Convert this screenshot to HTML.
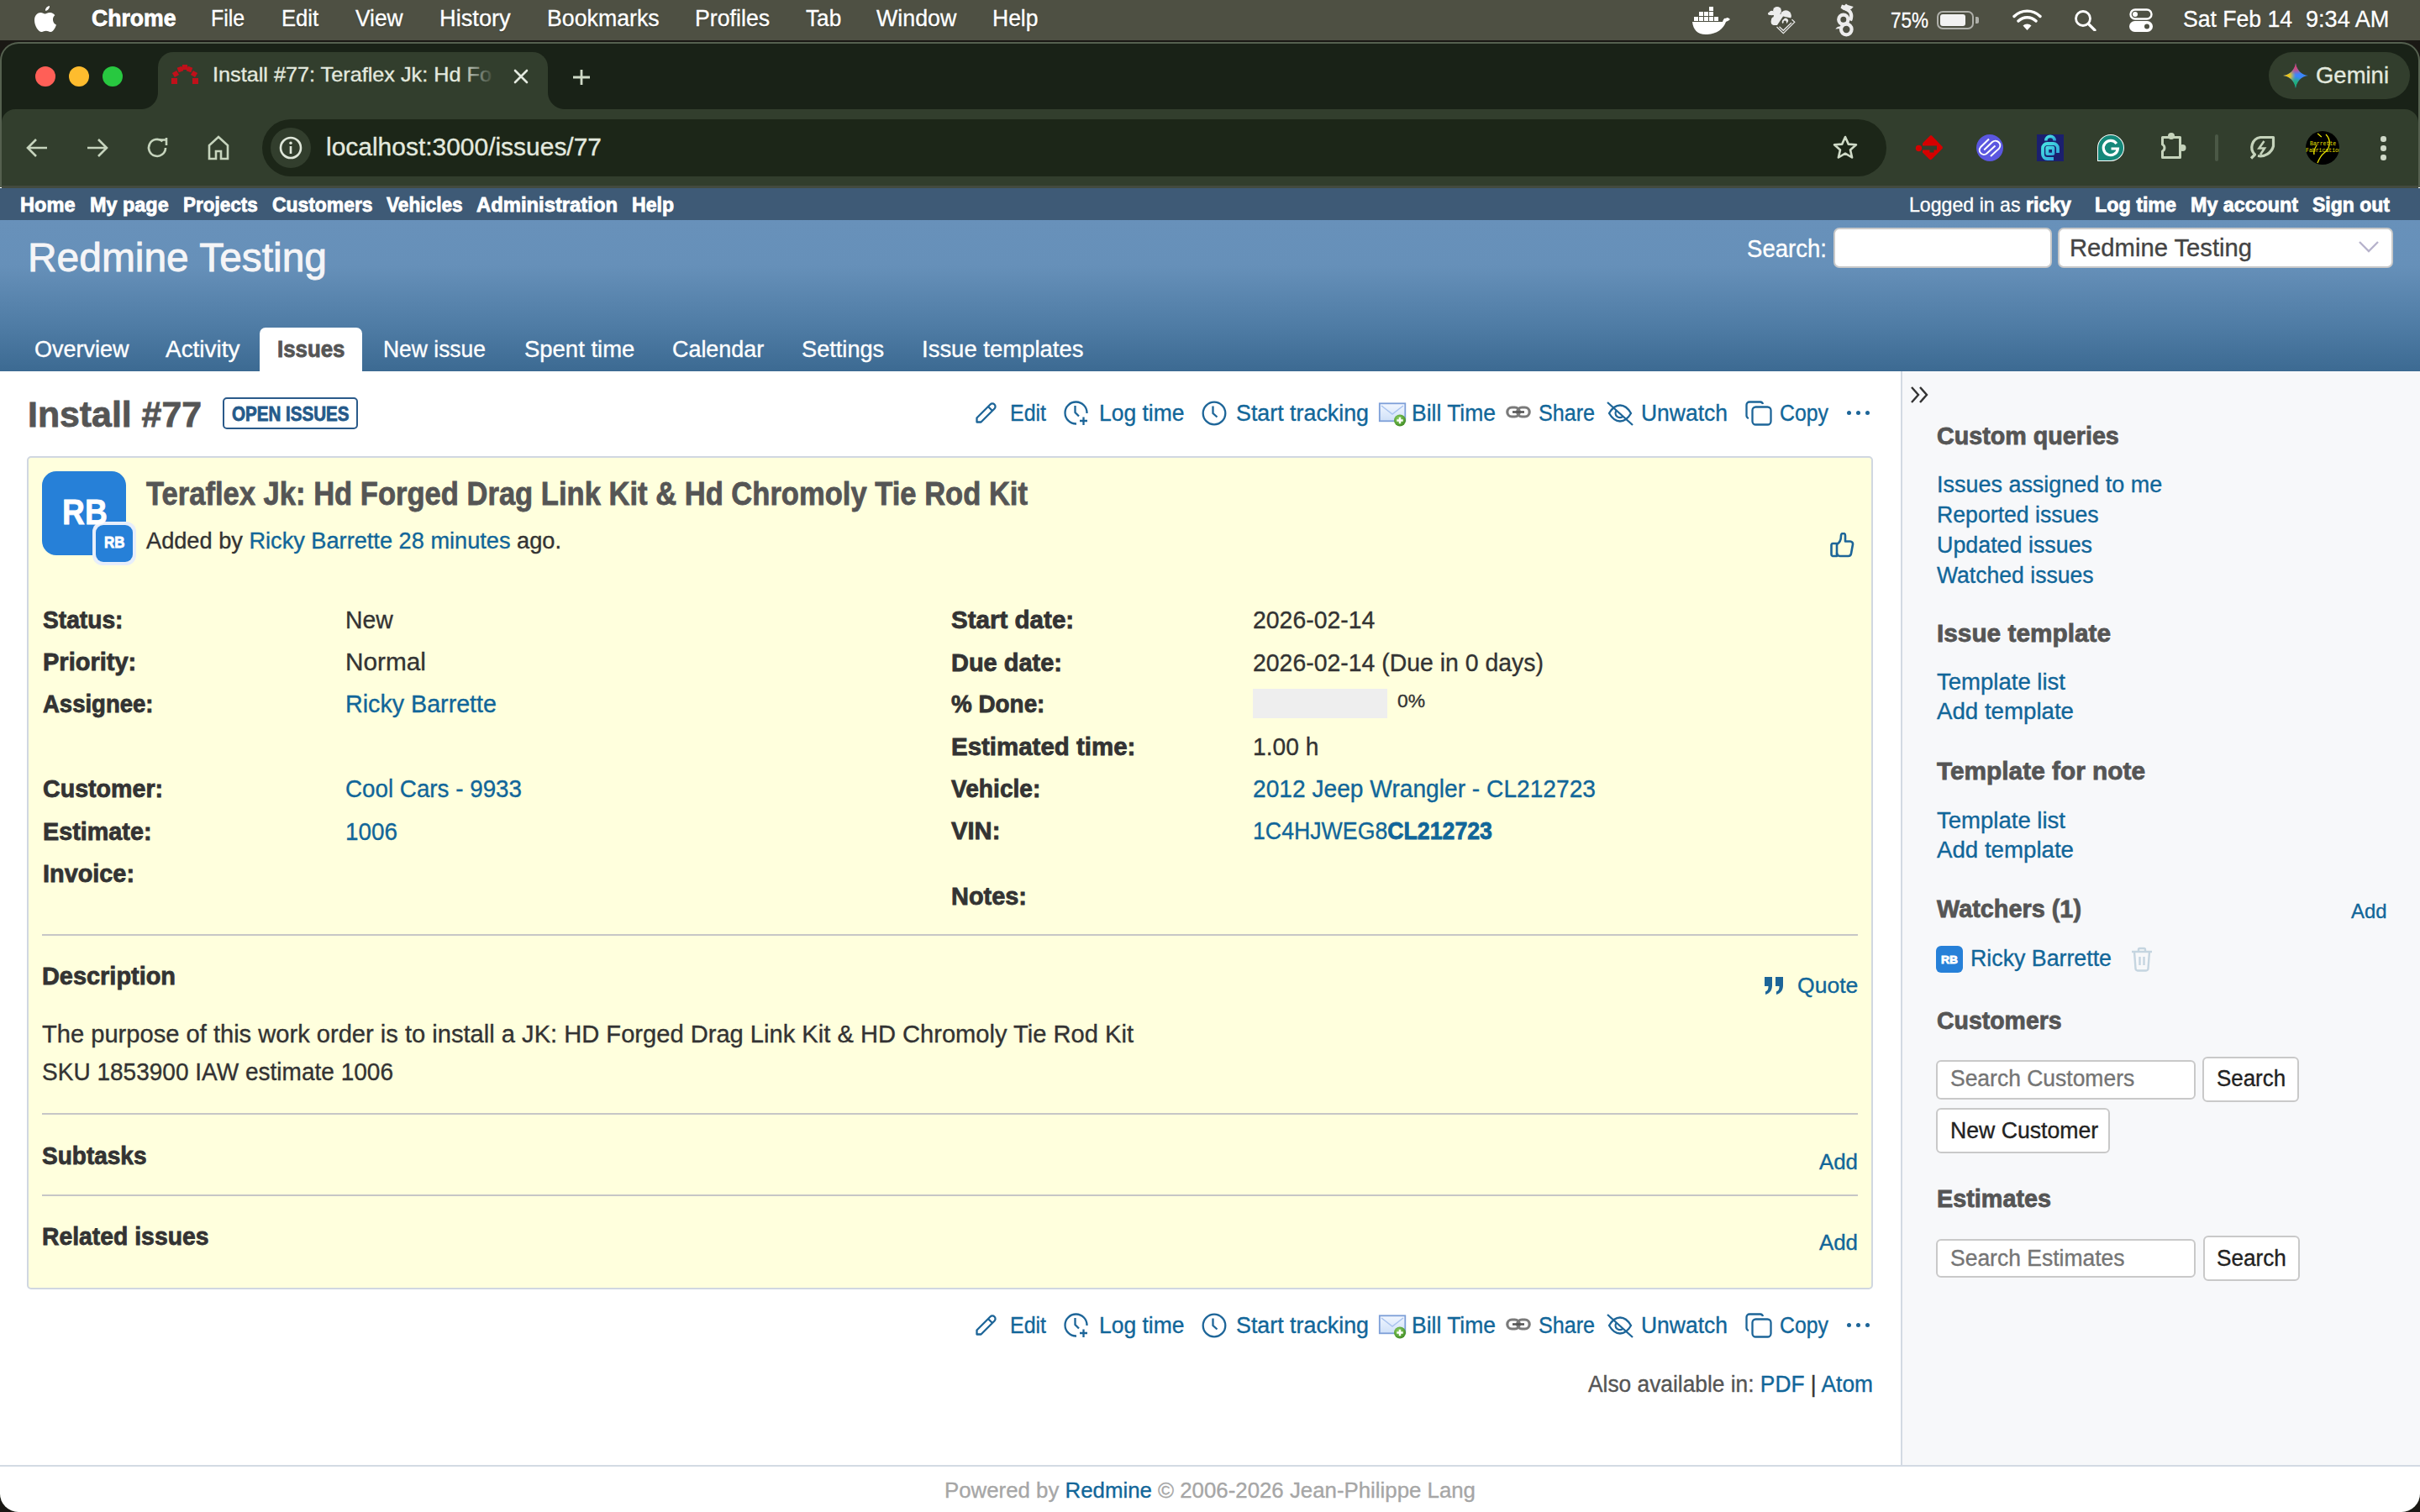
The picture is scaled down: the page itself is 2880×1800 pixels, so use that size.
<!DOCTYPE html><html><head><meta charset="utf-8"><style>html,body{margin:0;padding:0;width:2880px;height:1800px;overflow:hidden;background:#000;font-family:"Liberation Sans",sans-serif}.t{position:absolute;white-space:nowrap;line-height:1;transform-origin:0 0;-webkit-text-stroke:0.35px currentColor}.tb{-webkit-text-stroke:0.8px currentColor}b{font-weight:bold;-webkit-text-stroke:0.8px currentColor}</style></head><body>
<div style="position:absolute;left:0;top:0;width:2880px;height:48px;background:#4e5043"></div>
<div style="position:absolute;left:0;top:48px;width:2880px;height:2px;background:#15140f"></div>
<div style="position:absolute;left:0;top:48px;width:2880px;height:1752px;background:#1a1814"></div>
<div style="position:absolute;left:0;top:50px;width:2880px;height:1750px;background:#192217;border-radius:22px;overflow:hidden;box-shadow:inset 0 0 0 2px #55604f"></div>
<div style="position:absolute;left:2px;top:130px;width:2876px;height:94px;background:#323e2d;border-radius:16px 16px 0 0"></div>
<div style="position:absolute;left:188px;top:62px;width:464px;height:80px;background:#323e2d;border-radius:18px 18px 0 0"></div>
<div style="position:absolute;left:168px;top:110px;width:20px;height:20px;background:radial-gradient(circle at 0 0,#192217 19.5px,#323e2d 20.5px)"></div>
<div style="position:absolute;left:652px;top:110px;width:20px;height:20px;background:radial-gradient(circle at 100% 0,#192217 19.5px,#323e2d 20.5px)"></div>
<div style="position:absolute;left:42px;top:79px;width:24px;height:24px;border-radius:50%;background:#ff5f57"></div>
<div style="position:absolute;left:82px;top:79px;width:24px;height:24px;border-radius:50%;background:#febc2e"></div>
<div style="position:absolute;left:122px;top:79px;width:24px;height:24px;border-radius:50%;background:#28c840"></div>
<svg style="position:absolute;left:203px;top:76px" width="34" height="26" viewBox="0 0 34 26">
<g fill="#c0101a">
<rect x="1" y="17" width="7" height="7"/><rect x="26" y="17" width="7" height="7"/>
<rect x="3" y="9" width="6" height="6" transform="rotate(-30 6 12)"/><rect x="25" y="9" width="6" height="6" transform="rotate(30 28 12)"/>
<rect x="8.5" y="3.5" width="6" height="6" transform="rotate(-20 11.5 6.5)"/><rect x="19.5" y="3.5" width="6" height="6" transform="rotate(20 22.5 6.5)"/>
<rect x="14" y="1" width="6" height="6"/>
</g></svg>
<svg style="position:absolute;left:610px;top:81px" width="20" height="20" viewBox="0 0 20 20"><path d="M3 3L17 17M17 3L3 17" stroke="#e3e9df" stroke-width="2.6" stroke-linecap="round"/></svg>
<svg style="position:absolute;left:680px;top:82px" width="24" height="20" viewBox="0 0 24 20"><path d="M12 1V19M2 10H22" stroke="#cfdac7" stroke-width="2.8"/></svg>
<div style="position:absolute;left:2700px;top:62px;width:168px;height:56px;background:#323e2d;border-radius:28px"></div>
<svg style="position:absolute;left:2717px;top:75px" width="30" height="30" viewBox="0 0 30 30"><defs>
<clipPath id="gclip"><path d="M15 0C15.8 8 22 14.2 30 15C22 15.8 15.8 22 15 30C14.2 22 8 15.8 0 15C8 14.2 14.2 8 15 0Z"/></clipPath>
<radialGradient id="gy" cx="0" cy="15" r="15" gradientUnits="userSpaceOnUse"><stop offset="0" stop-color="#ffb800"/><stop offset=".55" stop-color="#ffd000" stop-opacity=".85"/><stop offset="1" stop-color="#ffd000" stop-opacity="0"/></radialGradient>
<radialGradient id="gr" cx="15" cy="0" r="14" gradientUnits="userSpaceOnUse"><stop offset="0" stop-color="#ff2d4a"/><stop offset=".6" stop-color="#f04060" stop-opacity=".7"/><stop offset="1" stop-color="#f04060" stop-opacity="0"/></radialGradient>
<radialGradient id="gn" cx="15" cy="30" r="14" gradientUnits="userSpaceOnUse"><stop offset="0" stop-color="#00c060"/><stop offset=".6" stop-color="#20b860" stop-opacity=".75"/><stop offset="1" stop-color="#20b860" stop-opacity="0"/></radialGradient>
</defs><g clip-path="url(#gclip)"><rect width="30" height="30" fill="#3b86fb"/><rect width="30" height="30" fill="url(#gy)"/><rect width="30" height="30" fill="url(#gr)"/><rect width="30" height="30" fill="url(#gn)"/></g></svg>
<div style="position:absolute;left:312px;top:142px;width:1933px;height:68px;background:#1c2618;border-radius:34px"></div>
<div style="position:absolute;left:322px;top:152px;width:48px;height:48px;background:#323e2d;border-radius:50%"></div>
<svg style="position:absolute;left:332px;top:162px" width="28" height="28" viewBox="0 0 28 28"><circle cx="14" cy="14" r="12" fill="none" stroke="#dfe7da" stroke-width="2.6"/><rect x="12.7" y="12" width="2.6" height="9" fill="#dfe7da"/><circle cx="14" cy="8.3" r="1.7" fill="#dfe7da"/></svg>
<svg style="position:absolute;left:30px;top:163px" width="28" height="26" viewBox="0 0 28 26"><path d="M26 13H4M13 3L3 13L13 23" fill="none" stroke="#c6d4bd" stroke-width="2.6"/></svg>
<svg style="position:absolute;left:102px;top:163px" width="28" height="26" viewBox="0 0 28 26"><path d="M2 13H24M15 3L25 13L15 23" fill="none" stroke="#c6d4bd" stroke-width="2.6"/></svg>
<svg style="position:absolute;left:174px;top:162px" width="28" height="28" viewBox="0 0 28 28"><path d="M23 14A10 10 0 1 1 19.5 6.3" fill="none" stroke="#c6d4bd" stroke-width="2.6"/><path d="M16 4.5H24V2.5M24 2V11" fill="none" stroke="#c6d4bd" stroke-width="2.6"/></svg>
<svg style="position:absolute;left:246px;top:161px" width="28" height="30" viewBox="0 0 28 30"><path d="M3 28V12L14 2L25 12V28H17V19H11V28Z" fill="none" stroke="#c6d4bd" stroke-width="2.6" stroke-linejoin="miter"/></svg>
<svg style="position:absolute;left:2180px;top:160px" width="32" height="32" viewBox="0 0 32 32"><path d="M16 3L19.8 11.6L29 12.3L22 18.4L24.1 27.5L16 22.7L7.9 27.5L10 18.4L3 12.3L12.2 11.6Z" fill="none" stroke="#cfdac7" stroke-width="2.6" stroke-linejoin="round"/></svg>
<svg style="position:absolute;left:2278px;top:159px" width="36" height="34" viewBox="2278 159 36 34"><path d="M2297 161.5Q2298 160.5 2299 161.5L2311.5 174.5Q2312.5 176 2311.5 177L2299 189.5Q2297.5 191 2296 189.5L2288 181.5V170.5Z" fill="#d50000"/><path d="M2287 173.5H2305V178.5H2301.5V181.5H2296.5V178.5H2287Z" fill="#323e2d"/><circle cx="2283.5" cy="176.5" r="3.7" fill="#d50000"/></svg>
<svg style="position:absolute;left:2348px;top:156px" width="40" height="40" viewBox="0 0 40 40"><circle cx="20" cy="20" r="16" fill="#5b57e0"/><path d="M19 9.5L9 19.3A5.25 5.25 0 0 0 16.4 26.7L26.5 17.5M13.2 22.5L23 13A5.6 5.6 0 0 1 30.9 20.9L21 30" fill="none" stroke="#fff" stroke-width="2"/></svg>
<svg style="position:absolute;left:2420px;top:156px" width="40" height="40" viewBox="0 0 40 40"><defs><linearGradient id="lg" x1="0" y1="0" x2="1" y2="1"><stop offset="0" stop-color="#48e4e2"/><stop offset="1" stop-color="#2ea2da"/></linearGradient></defs><rect x="4" y="4" width="32" height="32" fill="#1b1f6e"/><path d="M14.8 11.5A5.2 5.2 0 0 1 25.2 11.5" fill="none" stroke="url(#lg)" stroke-width="3.7"/><path d="M24 33H16.5A5.5 5.5 0 0 1 11 27.5V20.5A5.5 5.5 0 0 1 16.5 15H23.5A5.5 5.5 0 0 1 29 20.5V26" fill="none" stroke="url(#lg)" stroke-width="3.8"/><rect x="14.3" y="17.7" width="11" height="11.4" rx="2.5" fill="url(#lg)"/><rect x="18.3" y="22" width="3.7" height="3.7" fill="#1b1f6e"/></svg>
<svg style="position:absolute;left:2495px;top:159px" width="34" height="34" viewBox="0 0 34 34"><path d="M17 1A16 16 0 1 1 17 33H1V17A16 16 0 0 1 17 1Z" fill="#fff"/><path d="M17 2A15 15 0 1 1 17 32H2V17A15 15 0 0 1 17 2Z" fill="#15887a"/><path d="M23.8 12A8.6 8.6 0 1 0 25.4 18H17.5" fill="none" stroke="#fff" stroke-width="3.2"/></svg>
<svg style="position:absolute;left:2568px;top:156px" width="36" height="36" viewBox="0 0 36 36"><path d="M5.5 7.5H26.5V17.5V31.5H5.5V24A4.5 4.5 0 0 0 5.5 16Z" fill="none" stroke="#c5d3bb" stroke-width="3" stroke-linejoin="round"/><circle cx="16" cy="6" r="4" fill="#c5d3bb"/><circle cx="29.5" cy="20" r="4" fill="#c5d3bb"/></svg>
<div style="position:absolute;left:2636px;top:160px;width:4px;height:32px;background:#4b5846;border-radius:2px"></div>
<svg style="position:absolute;left:2676px;top:160px" width="34" height="32" viewBox="0 0 34 32"><path d="M3 28.5L7.5 24A12 12 0 0 1 14 3.5H29.5V14A16 16 0 0 1 11 25.5" fill="none" stroke="#c5d3bb" stroke-width="3.2" stroke-linejoin="round"/><path d="M18.5 8L12.5 16.5H19L14 24" fill="none" stroke="#c5d3bb" stroke-width="2.6"/></svg>
<svg style="position:absolute;left:2744px;top:156px" width="40" height="40" viewBox="0 0 40 40"><circle cx="20" cy="20" r="20" fill="#000"/><g fill="none" stroke="#e8e000" stroke-width="1.3"><path d="M14 3C16 4 17 6 19 7M24 4C30 10 30 20 22 26C18 29 16 33 14 38"/><path d="M10 28C9 24 11 20 13 17" /></g><text x="5" y="17" font-family="Liberation Mono" font-size="6.5" fill="#e8e000">Barrette</text><text x="0" y="25" font-family="Liberation Mono" font-size="6.5" fill="#e8e000">Fabrication</text></svg>
<div style="position:absolute;left:2833px;top:162px;width:6.5px;height:6.5px;border-radius:50%;background:#cfd9c8"></div>
<div style="position:absolute;left:2833px;top:173px;width:6.5px;height:6.5px;border-radius:50%;background:#cfd9c8"></div>
<div style="position:absolute;left:2833px;top:184px;width:6.5px;height:6.5px;border-radius:50%;background:#cfd9c8"></div>
<svg style="position:absolute;left:40px;top:7px" width="28" height="31" viewBox="0 0 28 31"><path d="M19 0C19.3 2.6 17 5.8 14 5.8C13.7 3.2 16 0.4 19 0ZM23 16.5C23 21 27 22.5 27 22.5C27 22.6 24.5 31 20 31C18 31 17.2 29.8 14.8 29.8C12.4 29.8 11.5 31 9.6 31C5.4 31 1 23.5 1 17C1 10.8 5 8 8.4 8C10.5 8 12.3 9.4 13.6 9.4C14.8 9.4 16.9 7.8 19.4 8C20.4 8 23.4 8.4 25.4 11.3C25.2 11.4 23 12.8 23 16.5Z" fill="#fff"/></svg>
<svg style="position:absolute;left:2014px;top:5px" width="46" height="37" viewBox="0 0 46 37"><g fill="#fff">
<rect x="2" y="15" width="5" height="5"/><rect x="8" y="15" width="5" height="5"/><rect x="14" y="15" width="5" height="5"/><rect x="20" y="15" width="5" height="5"/><rect x="26" y="15" width="5" height="5"/>
<rect x="8" y="9" width="5" height="5"/><rect x="14" y="9" width="5" height="5"/><rect x="20" y="9" width="5" height="5"/><rect x="20" y="3" width="5" height="5"/>
<path d="M0 21H36C37 18 38 16 40 17C41 15 43 16 45 18C43 20 41 20 40 21C37 30 28 36 16 36C6 36 1 30 0 21Z"/></g></svg>
<svg style="position:absolute;left:2100px;top:5px" width="40" height="40" viewBox="2100 5 40 40"><g fill="#ececec"><circle cx="2115" cy="12.8" r="4.9"/><circle cx="2108.5" cy="15.5" r="2.8"/><rect x="2104" y="14.5" width="13" height="3.5" rx="1.7"/><circle cx="2125.3" cy="18.8" r="6.6"/><circle cx="2115.3" cy="19.8" r="4.6"/><circle cx="2111.6" cy="25.8" r="4"/><rect x="2108" y="20" width="22" height="10" rx="4"/></g><path d="M2122 19.5L2113.8 31.8L2122.3 40.2L2136.5 26.2L2131.5 21.5Z" fill="#4b4d3f"/><path d="M2114.5 32L2122.3 39.6L2135.8 26.3L2132.5 23.2M2117.5 31.8L2122.3 36.3L2132 27" fill="none" stroke="#ececec" stroke-width="1.2"/><path d="M2122 27.5A2.6 2.6 0 1 1 2126.8 25.8A2 2 0 1 0 2123.5 23.5" fill="none" stroke="#ececec" stroke-width="1.8"/></svg>
<svg style="position:absolute;left:2178px;top:2px" width="34" height="44" viewBox="2178 2 34 44"><g fill="none" stroke="#ececec" stroke-width="4.2"><circle cx="2193.8" cy="23.2" r="5.6"/><circle cx="2197.3" cy="35" r="6.3"/><path d="M2196 10.5C2203.5 12.5 2204.5 19 2202 24.5"/></g><path d="M2190.5 9.5L2192 5.5L2195 6.5L2197 4.5L2199 6L2205.8 8L2203.5 10.5L2199 12.5L2194 12Z" fill="#ececec"/><path d="M2184.3 34.5C2186 32 2188 31 2190 31.5L2190 34Z" fill="#ececec"/></svg>
<div style="position:absolute;left:2305px;top:13px;width:44px;height:22px;border:2px solid rgba(255,255,255,.55);border-radius:7px;box-sizing:border-box"></div>
<div style="position:absolute;left:2309px;top:17px;width:30px;height:14px;background:#f2f2f2;border-radius:3px"></div>
<div style="position:absolute;left:2351px;top:20px;width:4px;height:8px;background:rgba(255,255,255,.55);border-radius:0 2px 2px 0"></div>
<svg style="position:absolute;left:2395px;top:11px" width="35" height="26" viewBox="0 0 35 26"><path d="M17.5 25L12.5 19.5A7 7 0 0 1 22.5 19.5Z" fill="#fff"/><path d="M7 14A15 15 0 0 1 28 14M2 8.5A22 22 0 0 1 33 8.5" fill="none" stroke="#fff" stroke-width="3.4" stroke-linecap="round"/></svg>
<svg style="position:absolute;left:2468px;top:11px" width="28" height="26" viewBox="0 0 28 26"><circle cx="11" cy="11" r="8.5" fill="none" stroke="#fff" stroke-width="2.8"/><path d="M17.5 17.5L25 25" stroke="#fff" stroke-width="3.2" stroke-linecap="round"/></svg>
<svg style="position:absolute;left:2534px;top:10px" width="28" height="28" viewBox="0 0 28 28"><rect x="1.5" y="1.5" width="25" height="11" rx="5.5" fill="none" stroke="#fff" stroke-width="2.4"/><circle cx="7" cy="7" r="3" fill="#fff"/><rect x="0" y="15" width="28" height="13" rx="6.5" fill="#fff"/><circle cx="21" cy="21.5" r="3" fill="#4e5043"/></svg>
<div style="position:absolute;left:0;top:223px;width:2880px;height:1577px;background:#fff;border-radius:0 0 22px 22px;overflow:hidden"></div>
<div style="position:absolute;left:0;top:224px;width:2880px;height:39px;background:#3e5a76"></div>
<div style="position:absolute;left:2px;top:221px;width:2876px;height:3px;background:#434a3f"></div>
<div style="position:absolute;left:0;top:262px;width:2880px;height:180px;background:linear-gradient(180deg,#6891ba 0%,#6690b9 30%,#4f7ca5 70%,#3c6a92 100%)"></div>
<div style="position:absolute;left:2262px;top:442px;width:2618px;height:1303px;background:#f7f8fa;border-left:2px solid #d3dae3"></div>
<div style="position:absolute;left:0;top:1744px;width:2880px;height:2px;background:#d3dae3"></div>
<div style="position:absolute;left:2182px;top:271px;width:260px;height:48px;background:#fff;border:2px solid #c9c9c9;border-radius:7px;box-sizing:border-box"></div>
<div style="position:absolute;left:2449px;top:271px;width:399px;height:48px;background:#fff;border:2px solid #c9c9c9;border-radius:7px;box-sizing:border-box"></div>
<svg style="position:absolute;left:2806px;top:286px" width="26" height="16" viewBox="0 0 26 16"><path d="M2 2L13 13L24 2" fill="none" stroke="#b7b3cc" stroke-width="2.4"/></svg>
<div style="position:absolute;left:309px;top:390px;width:122px;height:53px;background:#fff;border-radius:7px 7px 0 0"></div>
<div style="position:absolute;left:265px;top:473px;width:161px;height:38px;border:2.5px solid #2a5a8a;border-radius:5px;box-sizing:border-box"></div>
<svg style="position:absolute;left:1160px;top:479px" width="28" height="26" viewBox="0 0 28 26"><path d="M2.5 23.5V18.5L18.5 2.5A3 3 0 0 1 23.5 7.5L7.5 23.5Z M16 5L21 10" fill="none" stroke="#1d6598" stroke-width="2.3" stroke-linejoin="round"/></svg>
<svg style="position:absolute;left:1265px;top:475px" width="34" height="34" viewBox="0 0 34 34"><path d="M28.5 17A13 13 0 1 0 16 29.5" fill="none" stroke="#1d6598" stroke-width="2.3"/><path d="M14.5 8V16L19 20.5M20 26H29M24.5 21.5V31" fill="none" stroke="#1d6598" stroke-width="2.3"/></svg>
<svg style="position:absolute;left:1429px;top:475px" width="34" height="34" viewBox="0 0 34 34"><circle cx="16" cy="17" r="13.3" fill="none" stroke="#1d6598" stroke-width="2.3"/><path d="M14.5 8.5V17L19.5 21.5" fill="none" stroke="#1d6598" stroke-width="2.3"/></svg>
<svg style="position:absolute;left:1640px;top:478px" width="36" height="32" viewBox="0 0 36 32"><defs><linearGradient id="env480" x1="0" y1="0" x2="0" y2="1"><stop offset="0" stop-color="#f2f7ff"/><stop offset="1" stop-color="#cfe0f8"/></linearGradient><radialGradient id="grn480" cx=".4" cy=".35" r=".7"><stop offset="0" stop-color="#8cd060"/><stop offset="1" stop-color="#3d8a22"/></radialGradient></defs><rect x="1.8" y="2.3" width="30.5" height="21" fill="url(#env480)" stroke="#7d9fd8" stroke-width="1.8"/><path d="M4 5L17 15L30 5" fill="none" stroke="#a9c3ee" stroke-width="1.5"/><circle cx="26" cy="22.5" r="7" fill="url(#grn480)"/><path d="M26 18.8V26.2M22.3 22.5H29.7" stroke="#fff" stroke-width="2.4"/></svg>
<svg style="position:absolute;left:1792px;top:483px" width="30" height="16" viewBox="0 0 30 16"><rect x="1.8" y="2" width="14.5" height="11" rx="5.5" fill="none" stroke="#7a7a7a" stroke-width="3.2"/><rect x="13.7" y="2" width="14.5" height="11" rx="5.5" fill="none" stroke="#7a7a7a" stroke-width="3.2"/><path d="M8 7.5H22" stroke="#555" stroke-width="2.6"/></svg>
<svg style="position:absolute;left:1910px;top:476px" width="36" height="32" viewBox="0 0 36 32"><path d="M5 16C9 9 13 6.5 18 6.5C23 6.5 27 9 31 16C27 23 23 25.5 18 25.5C13 25.5 9 23 5 16Z" fill="none" stroke="#1d6598" stroke-width="2.3"/><path d="M14 12.5A5 5 0 0 0 21.5 19.5" fill="none" stroke="#1d6598" stroke-width="2.3"/><path d="M3 3L33 30" stroke="#1d6598" stroke-width="2.3"/></svg>
<svg style="position:absolute;left:2076px;top:476px" width="36" height="32" viewBox="0 0 36 32"><rect x="9.5" y="8.5" width="22" height="21" rx="4" fill="none" stroke="#1d6598" stroke-width="2.3"/><path d="M5 22A3.5 3.5 0 0 1 2.5 19V6A3.5 3.5 0 0 1 6 2.5H19A3.5 3.5 0 0 1 22 5" fill="none" stroke="#1d6598" stroke-width="2.3"/></svg>
<div style="position:absolute;left:2197.5px;top:489.3px;width:5px;height:5px;border-radius:50%;background:#1d6598"></div>
<div style="position:absolute;left:2208.5px;top:489.3px;width:5px;height:5px;border-radius:50%;background:#1d6598"></div>
<div style="position:absolute;left:2219.5px;top:489.3px;width:5px;height:5px;border-radius:50%;background:#1d6598"></div>
<svg style="position:absolute;left:1160px;top:1565px" width="28" height="26" viewBox="0 0 28 26"><path d="M2.5 23.5V18.5L18.5 2.5A3 3 0 0 1 23.5 7.5L7.5 23.5Z M16 5L21 10" fill="none" stroke="#1d6598" stroke-width="2.3" stroke-linejoin="round"/></svg>
<svg style="position:absolute;left:1265px;top:1561px" width="34" height="34" viewBox="0 0 34 34"><path d="M28.5 17A13 13 0 1 0 16 29.5" fill="none" stroke="#1d6598" stroke-width="2.3"/><path d="M14.5 8V16L19 20.5M20 26H29M24.5 21.5V31" fill="none" stroke="#1d6598" stroke-width="2.3"/></svg>
<svg style="position:absolute;left:1429px;top:1561px" width="34" height="34" viewBox="0 0 34 34"><circle cx="16" cy="17" r="13.3" fill="none" stroke="#1d6598" stroke-width="2.3"/><path d="M14.5 8.5V17L19.5 21.5" fill="none" stroke="#1d6598" stroke-width="2.3"/></svg>
<svg style="position:absolute;left:1640px;top:1564px" width="36" height="32" viewBox="0 0 36 32"><defs><linearGradient id="env1566" x1="0" y1="0" x2="0" y2="1"><stop offset="0" stop-color="#f2f7ff"/><stop offset="1" stop-color="#cfe0f8"/></linearGradient><radialGradient id="grn1566" cx=".4" cy=".35" r=".7"><stop offset="0" stop-color="#8cd060"/><stop offset="1" stop-color="#3d8a22"/></radialGradient></defs><rect x="1.8" y="2.3" width="30.5" height="21" fill="url(#env1566)" stroke="#7d9fd8" stroke-width="1.8"/><path d="M4 5L17 15L30 5" fill="none" stroke="#a9c3ee" stroke-width="1.5"/><circle cx="26" cy="22.5" r="7" fill="url(#grn1566)"/><path d="M26 18.8V26.2M22.3 22.5H29.7" stroke="#fff" stroke-width="2.4"/></svg>
<svg style="position:absolute;left:1792px;top:1569px" width="30" height="16" viewBox="0 0 30 16"><rect x="1.8" y="2" width="14.5" height="11" rx="5.5" fill="none" stroke="#7a7a7a" stroke-width="3.2"/><rect x="13.7" y="2" width="14.5" height="11" rx="5.5" fill="none" stroke="#7a7a7a" stroke-width="3.2"/><path d="M8 7.5H22" stroke="#555" stroke-width="2.6"/></svg>
<svg style="position:absolute;left:1910px;top:1562px" width="36" height="32" viewBox="0 0 36 32"><path d="M5 16C9 9 13 6.5 18 6.5C23 6.5 27 9 31 16C27 23 23 25.5 18 25.5C13 25.5 9 23 5 16Z" fill="none" stroke="#1d6598" stroke-width="2.3"/><path d="M14 12.5A5 5 0 0 0 21.5 19.5" fill="none" stroke="#1d6598" stroke-width="2.3"/><path d="M3 3L33 30" stroke="#1d6598" stroke-width="2.3"/></svg>
<svg style="position:absolute;left:2076px;top:1562px" width="36" height="32" viewBox="0 0 36 32"><rect x="9.5" y="8.5" width="22" height="21" rx="4" fill="none" stroke="#1d6598" stroke-width="2.3"/><path d="M5 22A3.5 3.5 0 0 1 2.5 19V6A3.5 3.5 0 0 1 6 2.5H19A3.5 3.5 0 0 1 22 5" fill="none" stroke="#1d6598" stroke-width="2.3"/></svg>
<div style="position:absolute;left:2197.5px;top:1575.3px;width:5px;height:5px;border-radius:50%;background:#1d6598"></div>
<div style="position:absolute;left:2208.5px;top:1575.3px;width:5px;height:5px;border-radius:50%;background:#1d6598"></div>
<div style="position:absolute;left:2219.5px;top:1575.3px;width:5px;height:5px;border-radius:50%;background:#1d6598"></div>
<div style="position:absolute;left:32px;top:543px;width:2197px;height:992px;background:#ffffdd;border:2px solid #d0d7e1;border-radius:5px;box-sizing:border-box"></div>
<div style="position:absolute;left:50px;top:561px;width:100px;height:100px;background:#2680d8;border-radius:17px"></div>
<div style="position:absolute;left:110px;top:621px;width:52px;height:52px;background:#e7eefa;border-radius:12px"></div>
<div style="position:absolute;left:114px;top:625px;width:44px;height:44px;background:#2680d8;border-radius:9px"></div>
<svg style="position:absolute;left:2177px;top:634px" width="32" height="30" viewBox="0 0 32 30"><path d="M4 13H9V28H4A2 2 0 0 1 2.5 26V14.5A2 2 0 0 1 4 13Z" fill="none" stroke="#1d6598" stroke-width="2.6" stroke-linejoin="round"/><path d="M9 14C13 12 14 8 14 3.5A2.5 2.5 0 0 1 19 3.5V10.5H25A3 3 0 0 1 28 14L26 25A3.5 3.5 0 0 1 22.5 28H13A4 4 0 0 1 9 24" fill="none" stroke="#1d6598" stroke-width="2.6" stroke-linejoin="round"/></svg>
<div style="position:absolute;left:1491px;top:820px;width:160px;height:35px;background:#eeeeee"></div>
<div style="position:absolute;left:50px;top:1112px;width:2161px;height:2px;background:#c6c6c6"></div>
<div style="position:absolute;left:50px;top:1325px;width:2161px;height:2px;background:#c6c6c6"></div>
<div style="position:absolute;left:50px;top:1422px;width:2161px;height:2px;background:#c6c6c6"></div>
<svg style="position:absolute;left:2099px;top:1161px" width="26" height="24" viewBox="0 0 26 24"><path d="M1 2H10V12C10 17 8 21 2 23V19.5C5 18.5 5.5 16 5.5 13H1Z M14 2H23V12C23 17 21 21 15 23V19.5C18 18.5 18.5 16 18.5 13H14Z" fill="#1d6598"/></svg>
<svg style="position:absolute;left:2272px;top:458px" width="26" height="24" viewBox="0 0 26 24"><path d="M3 3L11 12L3 21M13 3L21 12L13 21" fill="none" stroke="#333" stroke-width="2.4"/></svg>
<div style="position:absolute;left:2304px;top:1126px;width:32px;height:32px;background:#2680d8;border-radius:6px"></div>
<svg style="position:absolute;left:2535px;top:1127px" width="28" height="30" viewBox="0 0 28 30"><path d="M2 6H26M10 6V3.5A1.5 1.5 0 0 1 11.5 2H16.5A1.5 1.5 0 0 1 18 3.5V6M5 6L6.5 26A2.5 2.5 0 0 0 9 28.5H19A2.5 2.5 0 0 0 21.5 26L23 6M11.5 12V22M16.5 12V22" fill="none" stroke="#c5d5e0" stroke-width="2.4"/></svg>
<div style="position:absolute;background:#fff;border:2px solid #c9c9c9;border-radius:6px;box-sizing:border-box;left:2304px;top:1262px;width:309px;height:47px"></div>
<div style="position:absolute;background:#fff;border:2px solid #c9c9c9;border-radius:6px;box-sizing:border-box;left:2621px;top:1258px;width:115px;height:54px"></div>
<div style="position:absolute;background:#fff;border:2px solid #c9c9c9;border-radius:6px;box-sizing:border-box;left:2304px;top:1319px;width:207px;height:54px"></div>
<div style="position:absolute;background:#fff;border:2px solid #c9c9c9;border-radius:6px;box-sizing:border-box;left:2304px;top:1475px;width:309px;height:46px"></div>
<div style="position:absolute;background:#fff;border:2px solid #c9c9c9;border-radius:6px;box-sizing:border-box;left:2622px;top:1471px;width:115px;height:54px"></div>
<div class="t tb" id="t0" style="left:108.5px;top:8.8px;font-size:27px;color:#fff;font-weight:bold;transform:scaleX(0.9851);text-shadow:0 1px 2px rgba(0,0,0,.35);">Chrome</div>
<div class="t" id="t1" style="left:250.8px;top:8.8px;font-size:27px;color:#fff;transform:scaleX(0.9238);text-shadow:0 1px 2px rgba(0,0,0,.35);">File</div>
<div class="t" id="t2" style="left:335.4px;top:8.8px;font-size:27px;color:#fff;transform:scaleX(0.9499);text-shadow:0 1px 2px rgba(0,0,0,.35);">Edit</div>
<div class="t" id="t3" style="left:422.8px;top:8.8px;font-size:27px;color:#fff;transform:scaleX(0.9751);text-shadow:0 1px 2px rgba(0,0,0,.35);">View</div>
<div class="t" id="t4" style="left:523.3px;top:8.8px;font-size:27px;color:#fff;transform:scaleX(1.0081);text-shadow:0 1px 2px rgba(0,0,0,.35);">History</div>
<div class="t" id="t5" style="left:650.6px;top:8.8px;font-size:27px;color:#fff;transform:scaleX(0.9893);text-shadow:0 1px 2px rgba(0,0,0,.35);">Bookmarks</div>
<div class="t" id="t6" style="left:827.3px;top:8.8px;font-size:27px;color:#fff;transform:scaleX(0.9897);text-shadow:0 1px 2px rgba(0,0,0,.35);">Profiles</div>
<div class="t" id="t7" style="left:958.8px;top:8.8px;font-size:27px;color:#fff;transform:scaleX(0.9691);text-shadow:0 1px 2px rgba(0,0,0,.35);">Tab</div>
<div class="t" id="t8" style="left:1042.6px;top:8.8px;font-size:27px;color:#fff;transform:scaleX(0.9934);text-shadow:0 1px 2px rgba(0,0,0,.35);">Window</div>
<div class="t" id="t9" style="left:1180.5px;top:8.8px;font-size:27px;color:#fff;transform:scaleX(0.9814);text-shadow:0 1px 2px rgba(0,0,0,.35);">Help</div>
<div class="t" id="t10" style="left:2250.0px;top:11.5px;font-size:25px;color:#fff;transform:scaleX(0.8992);text-shadow:0 1px 2px rgba(0,0,0,.35);">75%</div>
<div class="t" id="t11" style="left:2598.0px;top:9.8px;font-size:27px;color:#fff;transform:scaleX(0.9841);text-shadow:0 1px 2px rgba(0,0,0,.35);">Sat Feb 14</div>
<div class="t" id="t12" style="left:2743.6px;top:9.8px;font-size:27px;color:#fff;transform:scaleX(1.0034);text-shadow:0 1px 2px rgba(0,0,0,.35);">9:34 AM</div>
<div class="t" id="t13" style="left:253.0px;top:77.1px;font-size:24px;color:#e3e9df;transform:scaleX(1.0516);">Install #77: Teraflex Jk: Hd Fo</div>
<div class="t" id="t14" style="left:2756.0px;top:76.2px;font-size:28px;color:#e3e9df;transform:scaleX(0.9808);">Gemini</div>
<div class="t" id="t15" style="left:388.0px;top:161.3px;font-size:29px;color:#e3e9df;transform:scaleX(1.0327);">localhost:3000/issues/77</div>
<div class="t tb" id="t16" style="left:24.4px;top:231.6px;font-size:24px;color:#fff;font-weight:bold;transform:scaleX(0.9822);">Home</div>
<div class="t tb" id="t17" style="left:106.5px;top:231.6px;font-size:24px;color:#fff;font-weight:bold;transform:scaleX(0.9757);">My page</div>
<div class="t tb" id="t18" style="left:217.8px;top:231.6px;font-size:24px;color:#fff;font-weight:bold;transform:scaleX(0.9365);">Projects</div>
<div class="t tb" id="t19" style="left:323.7px;top:231.6px;font-size:24px;color:#fff;font-weight:bold;transform:scaleX(0.9539);">Customers</div>
<div class="t tb" id="t20" style="left:459.7px;top:231.6px;font-size:24px;color:#fff;font-weight:bold;transform:scaleX(0.9440);">Vehicles</div>
<div class="t tb" id="t21" style="left:567.0px;top:231.6px;font-size:24px;color:#fff;font-weight:bold;transform:scaleX(0.9921);">Administration</div>
<div class="t tb" id="t22" style="left:752.0px;top:231.6px;font-size:24px;color:#fff;font-weight:bold;transform:scaleX(0.9612);">Help</div>
<div class="t" id="t23" style="left:2272.0px;top:231.6px;font-size:24px;color:#fff;transform:scaleX(0.9641);">Logged in as <b>ricky</b></div>
<div class="t tb" id="t24" style="left:2493.0px;top:231.6px;font-size:24px;color:#fff;font-weight:bold;transform:scaleX(0.9700);">Log time</div>
<div class="t tb" id="t25" style="left:2607.0px;top:231.6px;font-size:24px;color:#fff;font-weight:bold;transform:scaleX(0.9695);">My account</div>
<div class="t tb" id="t26" style="left:2752.0px;top:231.6px;font-size:24px;color:#fff;font-weight:bold;transform:scaleX(0.9585);">Sign out</div>
<div class="t" id="t27" style="left:33.0px;top:283.2px;font-size:48px;color:#f5f5f7;transform:scaleX(0.9982);-webkit-text-stroke:0.9px currentColor;">Redmine Testing</div>
<div class="t" id="t28" style="left:2079.0px;top:281.9px;font-size:29px;color:#fff;transform:scaleX(0.9504);">Search:</div>
<div class="t" id="t29" style="left:2463.0px;top:281.4px;font-size:29px;color:#444;transform:scaleX(1.0070);">Redmine Testing</div>
<div class="t" id="t30" style="left:41.0px;top:403.1px;font-size:27px;color:#fff;transform:scaleX(1.0006);">Overview</div>
<div class="t" id="t31" style="left:197.0px;top:403.1px;font-size:27px;color:#fff;transform:scaleX(1.0349);">Activity</div>
<div class="t" id="t32" style="left:456.0px;top:403.1px;font-size:27px;color:#fff;transform:scaleX(0.9796);">New issue</div>
<div class="t" id="t33" style="left:623.5px;top:403.1px;font-size:27px;color:#fff;transform:scaleX(1.0172);">Spent time</div>
<div class="t" id="t34" style="left:799.8px;top:403.1px;font-size:27px;color:#fff;transform:scaleX(0.9965);">Calendar</div>
<div class="t" id="t35" style="left:953.6px;top:403.1px;font-size:27px;color:#fff;transform:scaleX(1.0065);">Settings</div>
<div class="t" id="t36" style="left:1096.5px;top:403.1px;font-size:27px;color:#fff;transform:scaleX(1.0180);">Issue templates</div>
<div class="t tb" id="t37" style="left:330.0px;top:403.1px;font-size:27px;color:#555;font-weight:bold;transform:scaleX(0.9576);">Issues</div>
<div class="t tb" id="t38" style="left:33.0px;top:473.3px;font-size:42px;color:#555;font-weight:bold;transform:scaleX(1.0192);">Install #77</div>
<div class="t tb" id="t39" style="left:275.5px;top:481.8px;font-size:23px;color:#255a8a;font-weight:bold;transform:scaleX(0.8946);">OPEN ISSUES</div>
<div class="t" id="t40" style="left:1202.0px;top:479.1px;font-size:27px;color:#169;transform:scaleX(0.9241);">Edit</div>
<div class="t" id="t41" style="left:1307.5px;top:479.1px;font-size:27px;color:#169;transform:scaleX(0.9801);">Log time</div>
<div class="t" id="t42" style="left:1471.0px;top:479.1px;font-size:27px;color:#169;transform:scaleX(0.9933);">Start tracking</div>
<div class="t" id="t43" style="left:1680.0px;top:479.1px;font-size:27px;color:#169;transform:scaleX(0.9802);">Bill Time</div>
<div class="t" id="t44" style="left:1831.0px;top:479.1px;font-size:27px;color:#169;transform:scaleX(0.9297);">Share</div>
<div class="t" id="t45" style="left:1953.0px;top:479.1px;font-size:27px;color:#169;transform:scaleX(0.9805);">Unwatch</div>
<div class="t" id="t46" style="left:2118.0px;top:479.1px;font-size:27px;color:#169;transform:scaleX(0.9202);">Copy</div>
<div class="t" id="t47" style="left:1202.0px;top:1565.0px;font-size:27px;color:#169;transform:scaleX(0.9241);">Edit</div>
<div class="t" id="t48" style="left:1307.5px;top:1565.0px;font-size:27px;color:#169;transform:scaleX(0.9801);">Log time</div>
<div class="t" id="t49" style="left:1471.0px;top:1565.0px;font-size:27px;color:#169;transform:scaleX(0.9933);">Start tracking</div>
<div class="t" id="t50" style="left:1680.0px;top:1565.0px;font-size:27px;color:#169;transform:scaleX(0.9802);">Bill Time</div>
<div class="t" id="t51" style="left:1831.0px;top:1565.0px;font-size:27px;color:#169;transform:scaleX(0.9297);">Share</div>
<div class="t" id="t52" style="left:1953.0px;top:1565.0px;font-size:27px;color:#169;transform:scaleX(0.9805);">Unwatch</div>
<div class="t" id="t53" style="left:2118.0px;top:1565.0px;font-size:27px;color:#169;transform:scaleX(0.9202);">Copy</div>
<div class="t tb" id="t54" style="left:73.5px;top:589.3px;font-size:42px;color:#fff;font-weight:bold;transform:scaleX(0.8867);">RB</div>
<div class="t tb" id="t55" style="left:123.8px;top:637.4px;font-size:18px;color:#fff;font-weight:bold;transform:scaleX(0.9385);">RB</div>
<div class="t tb" id="t56" style="left:174.0px;top:569.3px;font-size:38px;color:#555;font-weight:bold;transform:scaleX(0.9094);">Teraflex Jk: Hd Forged Drag Link Kit &amp; Hd Chromoly Tie Rod Kit</div>
<div class="t" id="t57" style="left:174.0px;top:630.6px;font-size:27px;color:#333;transform:scaleX(1.0065);">Added by <span style="color:#169">Ricky Barrette</span> <span style="color:#169">28 minutes</span> ago.</div>
<div class="t tb" id="t58" style="left:50.5px;top:723.1px;font-size:29.3px;color:#333;font-weight:bold;transform:scaleX(0.9618);">Status:</div>
<div class="t tb" id="t59" style="left:50.5px;top:773.1px;font-size:29.3px;color:#333;font-weight:bold;transform:scaleX(0.9908);">Priority:</div>
<div class="t tb" id="t60" style="left:50.5px;top:823.1px;font-size:29.3px;color:#333;font-weight:bold;transform:scaleX(0.9391);">Assignee:</div>
<div class="t tb" id="t61" style="left:50.5px;top:924.1px;font-size:29.3px;color:#333;font-weight:bold;transform:scaleX(0.9768);">Customer:</div>
<div class="t tb" id="t62" style="left:50.5px;top:975.1px;font-size:29.3px;color:#333;font-weight:bold;transform:scaleX(0.9819);">Estimate:</div>
<div class="t tb" id="t63" style="left:50.5px;top:1025.1px;font-size:29.3px;color:#333;font-weight:bold;transform:scaleX(0.9845);">Invoice:</div>
<div class="t" id="t64" style="left:411.0px;top:723.1px;font-size:29.3px;color:#333;transform:scaleX(0.9674);">New</div>
<div class="t" id="t65" style="left:411.0px;top:773.1px;font-size:29.3px;color:#333;transform:scaleX(1.0167);">Normal</div>
<div class="t" id="t66" style="left:411.0px;top:823.1px;font-size:29.3px;color:#169;transform:scaleX(0.9784);">Ricky Barrette</div>
<div class="t" id="t67" style="left:411.0px;top:924.1px;font-size:29.3px;color:#169;transform:scaleX(0.9482);">Cool Cars - 9933</div>
<div class="t" id="t68" style="left:411.0px;top:975.1px;font-size:29.3px;color:#169;transform:scaleX(0.9511);">1006</div>
<div class="t tb" id="t69" style="left:1131.6px;top:723.1px;font-size:29.3px;color:#333;font-weight:bold;transform:scaleX(1.0090);">Start date:</div>
<div class="t tb" id="t70" style="left:1131.6px;top:773.6px;font-size:29.3px;color:#333;font-weight:bold;transform:scaleX(0.9889);">Due date:</div>
<div class="t tb" id="t71" style="left:1131.6px;top:823.1px;font-size:29.3px;color:#333;font-weight:bold;transform:scaleX(0.9505);">% Done:</div>
<div class="t tb" id="t72" style="left:1131.6px;top:874.1px;font-size:29.3px;color:#333;font-weight:bold;transform:scaleX(1.0057);">Estimated time:</div>
<div class="t tb" id="t73" style="left:1131.6px;top:923.5px;font-size:29.3px;color:#333;font-weight:bold;transform:scaleX(0.9607);">Vehicle:</div>
<div class="t tb" id="t74" style="left:1131.6px;top:974.1px;font-size:29.3px;color:#333;font-weight:bold;transform:scaleX(0.9964);">VIN:</div>
<div class="t tb" id="t75" style="left:1131.6px;top:1052.1px;font-size:29.3px;color:#333;font-weight:bold;transform:scaleX(0.9873);">Notes:</div>
<div class="t" id="t76" style="left:1491.0px;top:723.1px;font-size:29.3px;color:#333;transform:scaleX(0.9695);">2026-02-14</div>
<div class="t" id="t77" style="left:1491.0px;top:773.6px;font-size:29.3px;color:#333;transform:scaleX(0.9701);">2026-02-14 (Due in 0 days)</div>
<div class="t" id="t78" style="left:1663.0px;top:824.3px;font-size:22px;color:#333;transform:scaleX(1.0378);">0%</div>
<div class="t" id="t79" style="left:1491.0px;top:874.1px;font-size:29.3px;color:#333;transform:scaleX(0.9611);">1.00 h</div>
<div class="t" id="t80" style="left:1491.0px;top:923.5px;font-size:29.3px;color:#169;transform:scaleX(0.9610);">2012 Jeep Wrangler - CL212723</div>
<div class="t" id="t81" style="left:1491.0px;top:974.1px;font-size:29.3px;color:#169;transform:scaleX(0.9115);">1C4HJWEG8<b>CL212723</b></div>
<div class="t tb" id="t82" style="left:50.0px;top:1146.8px;font-size:30px;color:#333;font-weight:bold;transform:scaleX(0.9635);">Description</div>
<div class="t" id="t83" style="left:2138.7px;top:1159.9px;font-size:26px;color:#169;transform:scaleX(1.0208);">Quote</div>
<div class="t" id="t84" style="left:50.0px;top:1217.3px;font-size:29px;color:#333;transform:scaleX(1.0037);">The purpose of this work order is to install a JK: HD Forged Drag Link Kit &amp; HD Chromoly Tie Rod Kit</div>
<div class="t" id="t85" style="left:50.0px;top:1262.3px;font-size:29px;color:#333;transform:scaleX(0.9663);">SKU 1853900 IAW estimate 1006</div>
<div class="t tb" id="t86" style="left:50.0px;top:1360.5px;font-size:30px;color:#333;font-weight:bold;transform:scaleX(0.9333);">Subtasks</div>
<div class="t" id="t87" style="left:2165.0px;top:1370.8px;font-size:25px;color:#169;transform:scaleX(1.0341);">Add</div>
<div class="t tb" id="t88" style="left:50.0px;top:1456.5px;font-size:30px;color:#333;font-weight:bold;transform:scaleX(0.9447);">Related issues</div>
<div class="t" id="t89" style="left:2165.0px;top:1466.8px;font-size:25px;color:#169;transform:scaleX(1.0341);">Add</div>
<div class="t" id="t90" style="left:1890.0px;top:1635.0px;font-size:27px;color:#555;transform:scaleX(0.9750);">Also available in: <span style="color:#169">PDF</span> <span style="color:#333">|</span> <span style="color:#169">Atom</span></div>
<div class="t" id="t91" style="left:1124.0px;top:1760.6px;font-size:26px;color:#a6a6a6;transform:scaleX(0.9931);">Powered by <span style="color:#169">Redmine</span> © 2006-2026 Jean-Philippe Lang</div>
<div class="t tb" id="t92" style="left:2305.0px;top:504.8px;font-size:29px;color:#555;font-weight:bold;transform:scaleX(0.9892);">Custom queries</div>
<div class="t" id="t93" style="left:2305.0px;top:564.2px;font-size:27px;color:#169;transform:scaleX(0.9983);">Issues assigned to me</div>
<div class="t" id="t94" style="left:2305.0px;top:600.0px;font-size:27px;color:#169;transform:scaleX(0.9877);">Reported issues</div>
<div class="t" id="t95" style="left:2305.0px;top:635.5px;font-size:27px;color:#169;transform:scaleX(0.9940);">Updated issues</div>
<div class="t" id="t96" style="left:2305.0px;top:671.5px;font-size:27px;color:#169;transform:scaleX(0.9842);">Watched issues</div>
<div class="t tb" id="t97" style="left:2305.0px;top:740.0px;font-size:29px;color:#555;font-weight:bold;transform:scaleX(1.0274);">Issue template</div>
<div class="t" id="t98" style="left:2305.0px;top:798.6px;font-size:27px;color:#169;transform:scaleX(1.0196);">Template list</div>
<div class="t" id="t99" style="left:2305.0px;top:834.0px;font-size:27px;color:#169;transform:scaleX(1.0245);">Add template</div>
<div class="t tb" id="t100" style="left:2305.0px;top:904.1px;font-size:29px;color:#555;font-weight:bold;transform:scaleX(1.0284);">Template for note</div>
<div class="t" id="t101" style="left:2305.0px;top:964.0px;font-size:27px;color:#169;transform:scaleX(1.0196);">Template list</div>
<div class="t" id="t102" style="left:2305.0px;top:999.0px;font-size:27px;color:#169;transform:scaleX(1.0245);">Add template</div>
<div class="t tb" id="t103" style="left:2305.0px;top:1068.3px;font-size:29px;color:#555;font-weight:bold;transform:scaleX(0.9944);">Watchers (1)</div>
<div class="t" id="t104" style="left:2797.6px;top:1073.3px;font-size:24px;color:#169;transform:scaleX(0.9929);">Add</div>
<div class="t tb" id="t105" style="left:2310.0px;top:1136.0px;font-size:13px;color:#fff;font-weight:bold;transform:scaleX(1.0649);">RB</div>
<div class="t" id="t106" style="left:2345.0px;top:1127.5px;font-size:27px;color:#169;transform:scaleX(0.9909);">Ricky Barrette</div>
<div class="t tb" id="t107" style="left:2305.0px;top:1201.3px;font-size:29px;color:#555;font-weight:bold;transform:scaleX(0.9809);">Customers</div>
<div class="t" id="t108" style="left:2320.5px;top:1271.3px;font-size:27px;color:#757575;transform:scaleX(0.9803);">Search Customers</div>
<div class="t" id="t109" style="left:2637.5px;top:1271.3px;font-size:27px;color:#222;transform:scaleX(0.9595);">Search</div>
<div class="t" id="t110" style="left:2320.5px;top:1332.5px;font-size:27px;color:#222;transform:scaleX(0.9869);">New Customer</div>
<div class="t tb" id="t111" style="left:2305.0px;top:1412.8px;font-size:29px;color:#555;font-weight:bold;transform:scaleX(0.9926);">Estimates</div>
<div class="t" id="t112" style="left:2320.5px;top:1484.5px;font-size:27px;color:#757575;transform:scaleX(0.9807);">Search Estimates</div>
<div class="t" id="t113" style="left:2638.0px;top:1484.5px;font-size:27px;color:#222;transform:scaleX(0.9689);">Search</div>
<div style="position:absolute;left:548px;top:70px;width:46px;height:40px;background:linear-gradient(90deg,rgba(50,62,45,0),#323e2d 90%)"></div>
</body></html>
